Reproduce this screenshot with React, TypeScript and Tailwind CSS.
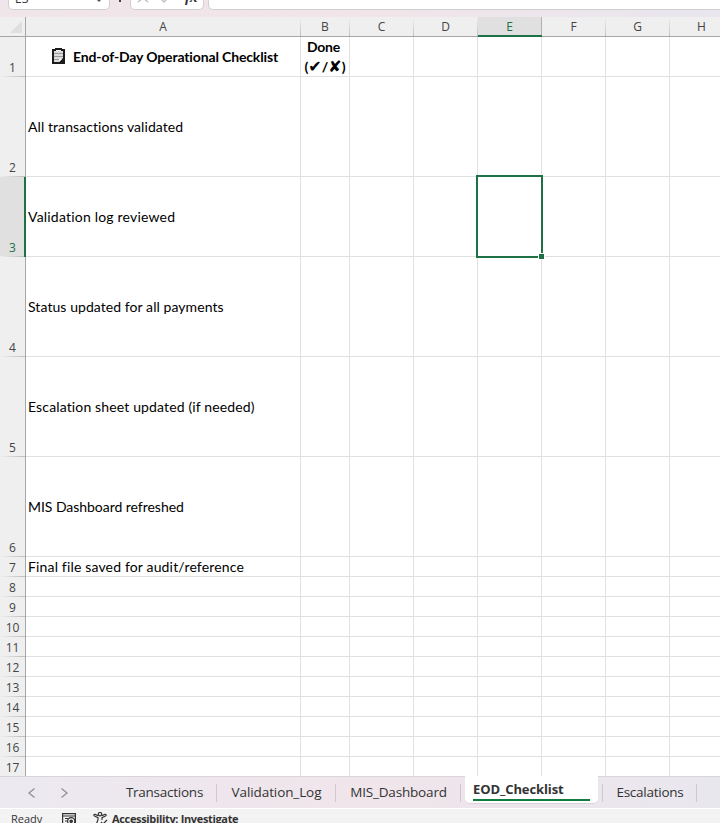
import React from "react";

const columns = [
  { name: "A", width: "w-[275px]" },
  { name: "B", width: "w-[49px]" },
  { name: "C", width: "w-[64px]" },
  { name: "D", width: "w-[64px]" },
  { name: "E", width: "w-[64px]" },
  { name: "F", width: "w-[64px]" },
  { name: "G", width: "w-[64px]" },
  { name: "H", width: "w-[64px]" },
];

const rows = [
  { height: "h-[40px]", text: "End-of-Day Operational Checklist", fit: "" },
  { height: "h-[100px]", text: "All transactions validated", fit: "tracking-[0.08px]" },
  { height: "h-[80px]", text: "Validation log reviewed", fit: "tracking-[0.2px]" },
  { height: "h-[100px]", text: "Status updated for all payments", fit: "tracking-[0.07px]" },
  { height: "h-[100px]", text: "Escalation sheet updated (if needed)", fit: "tracking-[0.14px]" },
  { height: "h-[100px]", text: "MIS Dashboard refreshed", fit: "tracking-[-0.04px]" },
  { height: "h-[20px]", text: "Final file saved for audit/reference", fit: "tracking-[0.16px]" },
  ...Array.from({ length: 10 }, () => ({ height: "h-[20px]", text: "", fit: "" })),
];

function Clipboard() {
  return (
    <svg className="shrink-0" width="15" height="17" viewBox="0 0 15 17">
      <path d="M1 1h13v15H1z" fill="#1c1c1f" />
      <path d="M3 3h9v11H3z" fill="#dcdcdc" />
      <path d="M3 5.5h9M3 8.5h9M3 11.5h6" stroke="#9a9a9a" />
      <path d="M12 10v4H8z" fill="#1c1c1f" />
      <path d="M8 11h3l-3 3z" fill="#fff" />
      <path d="M4 0h7v3H4z" fill="#1c1c1f" />
      <path d="M5 2h5v1H5z" fill="#eee" />
    </svg>
  );
}

function FormulaBar() {
  return (
    <div className="flex h-[17px] items-start overflow-hidden bg-gradient-to-r from-[#f0e5e9] via-[#f1e5e9] to-[#e9e6ee]">
      <div className="ml-2 flex h-[10px] w-[102px] items-end justify-between rounded-b-[5px] border border-t-0 border-[#cfcfcf] bg-white pr-[7px] pl-[6px]">
        <span className="mb-[3px] h-[15px] font-['Open_Sans'] text-[12px] leading-[15px] text-[#333]">E3</span>
        <svg width="5" height="9" viewBox="0 0 5 9"><path d="M0 0h4L2 2z" fill="#555" /></svg>
      </div>
      <div className="ml-[9px] h-[2px] w-[2px] bg-[#444]" />
      <div className="ml-[9px] flex h-[10px] w-[74px] items-start rounded-b-[5px] border border-t-0 border-[#cfcfcf] bg-white">
        <svg width="72" height="9" viewBox="0 0 72 9" fill="none" stroke="#bdbdbd" strokeWidth="1.3">
          <path d="M7 2l5-4 5 4M30-1l3 3 5-5" />
          <text x="54" y="2" fill="#333" stroke="none" fontFamily="Liberation Serif, serif" fontStyle="italic" fontWeight="bold" fontSize="15">fx</text>
        </svg>
      </div>
      <div className="ml-[4px] h-[10px] flex-1 rounded-bl-[5px] border-b border-l border-[#cfcfcf] bg-white" />
    </div>
  );
}

function ColumnHeaders() {
  return (
    <div className="flex h-[20px] overflow-hidden bg-[#efefef]">
      <div className="flex w-[26px] shrink-0 items-end justify-end border-r border-b border-[#a6a6a6] pr-[3px] pb-[3px]">
        <svg width="12" height="12" viewBox="0 0 12 12"><path d="M12 0v12H0z" fill="#dfdfdf" /></svg>
      </div>
      {columns.map((c) => (
        <div key={c.name} className={"flex shrink-0 " + c.width}>
          <div
            className={
              "flex-1 text-center font-['Open_Sans'] text-[12px] leading-[19px] " +
              (c.name === "E" ? "border-b-2 border-[#1e7145] bg-[#e0e0e0] text-[#1e7145]" : "border-b border-[#a6a6a6] text-[#444]")
            }
          >
            {c.name}
          </div>
          <div
            className={
              "w-px " +
              (c.name === "E"
                ? "border-b-2 border-[#1e7145] bg-[#b0b0b0]"
                : "border-b border-[#a6a6a6] bg-gradient-to-b from-[#efefef] to-[#c0c0c0]")
            }
          />
        </div>
      ))}
    </div>
  );
}

function Grid() {
  return (
    <div className="relative h-[739px] overflow-hidden bg-white">
      {rows.map((r, i) => (
        <div key={i} className={"flex " + r.height}>
          <div
            className={
              "flex w-[26px] shrink-0 flex-col " +
              (i === 2 ? "border-r-2 border-[#1e7145] bg-[#e0e0e0] text-[#1e7145]" : "border-r border-[#a6a6a6] bg-[#efefef] text-[#444]")
            }
          >
            <div className={"flex flex-1 items-end justify-center font-['Open_Sans'] text-[12px] leading-[16px] " + (i === 2 ? "pl-px" : "")}>
              {i + 1}
            </div>
            <div className="h-px bg-gradient-to-r from-[#efefef] to-[#bbb]" />
          </div>
          {columns.map((c) => (
            <div
              key={c.name}
              className={
                "flex shrink-0 items-center border-r border-b border-[#e0e0e0] font-[Lato] text-[14px] leading-[20px] whitespace-nowrap text-black " + c.width
              }
            >
              {c.name === "A" && i === 0 && (
                <div className="flex w-full items-center gap-[7px] pl-[25px] font-bold">
                  <Clipboard />
                  <span className="tracking-[-0.14px]">{r.text}</span>
                </div>
              )}
              {c.name === "A" && i > 0 && <span className={"pl-[2px] " + r.fit}>{r.text}</span>}
              {c.name === "B" && i === 0 && (
                <div className="flex w-full flex-col items-center font-bold">
                  <span className="pr-[3px] tracking-[-0.2px]">Done</span>
                  <span className="flex items-center">
                    <span>(</span>
                    <span className="font-['DejaVu_Sans'] text-[16px]">✔</span>
                    <span>/</span>
                    <span className="font-['DejaVu_Sans'] text-[16px]">✘</span>
                    <span>)</span>
                  </span>
                </div>
              )}
            </div>
          ))}
        </div>
      ))}
      <div className="absolute top-[138px] left-[476px] h-[83px] w-[67px] border-2 border-[#1e7145]">
        <div className="absolute -right-[4px] -bottom-[4px] h-[7px] w-[7px] border border-white bg-[#1e7145]" />
      </div>
    </div>
  );
}

function Tab({ name, width, fit }: { name: string; width: string; fit: string }) {
  return (
    <div className={"flex h-[32px] shrink-0 items-center justify-center border-t border-[#d8d4d8] " + width}>
      <span className={"flex-1 pl-px text-center whitespace-nowrap " + fit}>{name}</span>
      <div className="h-[18px] w-px bg-[#cccacd]" />
    </div>
  );
}

function SheetTabs() {
  return (
    <div className="flex h-[32px] shrink-0 overflow-hidden bg-gradient-to-r from-[#ece9f0] via-[#f0e5eb] to-[#e9e7ee] font-['Open_Sans'] text-[13.5px] text-[#333]">
      <div className="flex w-[112px] shrink-0 items-center gap-[26px] border-t border-[#d8d4d8] pl-[28px]">
        <svg width="7" height="10" viewBox="0 0 7 10" fill="none" stroke="#929095" strokeWidth="1.3"><path d="M6.5.5L1 5l5.5 4.5" /></svg>
        <svg width="7" height="10" viewBox="0 0 7 10" fill="none" stroke="#929095" strokeWidth="1.3"><path d="M.5.5L6 5 .5 9.5" /></svg>
      </div>
      <Tab name="Transactions" width="w-[105px]" fit="tracking-[-0.25px]" />
      <Tab name="Validation_Log" width="w-[119px]" fit="tracking-[-0.1px]" />
      <Tab name="MIS_Dashboard" width="w-[125px]" fit="tracking-[-0.17px]" />
      <div className="w-[4px] border-t border-[#d8d4d8]" />
      <div className="h-[28px] w-[133px] shrink-0 rounded-b-[5px] border-b border-[#d6d3d9] bg-white pt-[4px] pl-[8px]">
        <div className="h-[21px] w-[117px] border-b-2 border-[#107c41] text-[13px] leading-[18px] font-bold tracking-[-0.1px] whitespace-nowrap">EOD_Checklist</div>
      </div>
      <div className="flex w-[5px] items-center justify-end border-t border-[#d8d4d8]">
        <div className="h-[18px] w-px bg-[#cccacd]" />
      </div>
      <Tab name="Escalations" width="w-[94px]" fit="tracking-[-0.25px]" />
      <div className="flex-1 border-t border-[#d8d4d8]" />
    </div>
  );
}

function StatusBar() {
  return (
    <div className="flex h-[15px] shrink-0 items-start overflow-hidden border-t border-white bg-[#f3f3f3] font-['Open_Sans'] text-[11px] leading-[14px] text-[#333]">
      <span className="w-[50px] pt-[3px] pl-[11px]">Ready</span>
      <svg className="mt-[4px] ml-[12px] shrink-0" width="14" height="12" viewBox="0 0 14 12" fill="none" stroke="#333" strokeWidth="1.2">
        <path d="M.6 12V.6h12.8V12M.6 3h12.8M3 5.5h3M3 8h2" />
        <circle cx="9.2" cy="8.2" r="3.6" />
        <circle cx="9.2" cy="8.2" r="1.2" fill="#333" />
      </svg>
      <svg className="mt-[3px] ml-[17px] shrink-0" width="15" height="13" viewBox="0 0 15 13" fill="none" stroke="#333" strokeWidth="1.2">
        <circle cx="7" cy="2.2" r="1.7" />
        <path d="M5 3.6L2 2.3C.7 2 .5 3.7 1.5 4L5 5.6v2L3 13M9 3.6l3-1.3c1.3-.3 1.5 1.4.5 1.7L9 5.6V8M8 10l2 2 4-4" />
      </svg>
      <span className="pt-[3px] pl-[4px] font-bold tracking-[-0.34px] whitespace-nowrap">Accessibility: Investigate</span>
    </div>
  );
}

export default function App() {
  return (
    <div className="flex h-[823px] w-[720px] flex-col overflow-hidden bg-white">
      <FormulaBar />
      <ColumnHeaders />
      <Grid />
      <SheetTabs />
      <StatusBar />
    </div>
  );
}
